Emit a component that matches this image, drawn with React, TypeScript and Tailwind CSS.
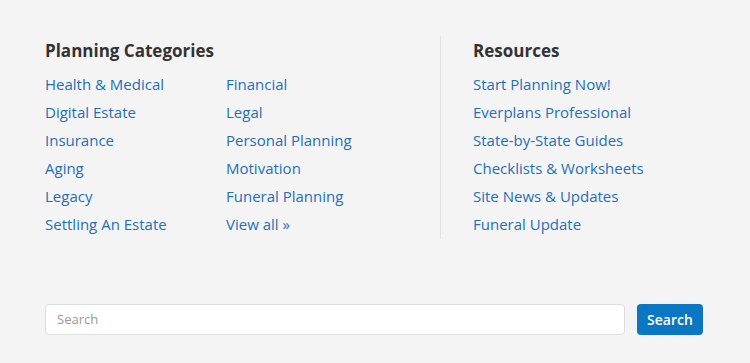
import React from "react";

const left1 = ["Health & Medical", "Digital Estate", "Insurance", "Aging", "Legacy", "Settling An Estate"];
const left2 = ["Financial", "Legal", "Personal Planning", "Motivation", "Funeral Planning", "View all »"];
const right = ["Start Planning Now!", "Everplans Professional", "State-by-State Guides", "Checklists & Worksheets", "Site News & Updates", "Funeral Update"];

const font = { fontFamily: '"Open Sans", "Liberation Sans", sans-serif' };

export default function App() {
  return (
    <div className="w-[750px] h-[363px] bg-[#f4f4f4] px-[45px] pt-[36px]" style={font}>
      <div className="flex">
        <div className="w-[396px] h-[203px] border-r border-[#e2e2e2] pt-[3px]">
          <h3 className="text-[17px] leading-[24px] font-bold text-[#333333]">Planning Categories</h3>
          <div className="flex mt-[7px]">
            <ul className="w-[181px]">
              {left1.map((t) => (
                <li key={t} className="text-[15px] leading-[28px] text-[#1f6fba]">{t}</li>
              ))}
            </ul>
            <ul>
              {left2.map((t) => (
                <li key={t} className="text-[15px] leading-[28px] text-[#1f6fba]">{t}</li>
              ))}
            </ul>
          </div>
        </div>
        <div className="pl-[32px] pt-[3px]">
          <h3 className="text-[17px] leading-[24px] font-bold text-[#333333]">Resources</h3>
          <ul className="mt-[7px]">
            {right.map((t) => (
              <li key={t} className="text-[15px] leading-[28px] text-[#1f6fba]">{t}</li>
            ))}
          </ul>
        </div>
      </div>
      <div className="flex gap-[12px] mt-[65px]">
        <input
          placeholder="Search"
          className="w-[580px] h-[31px] bg-white border border-[#dddddd] rounded-[4px] px-[11px] pb-[2px] text-[13px] text-[#333] placeholder:text-[#999999] outline-none"
          style={font}
        />
        <button className="w-[66px] h-[31px] bg-[#0b76c1] rounded-[4px] text-white text-[14px] font-semibold pb-[1px]" style={font}>
          Search
        </button>
      </div>
    </div>
  );
}
